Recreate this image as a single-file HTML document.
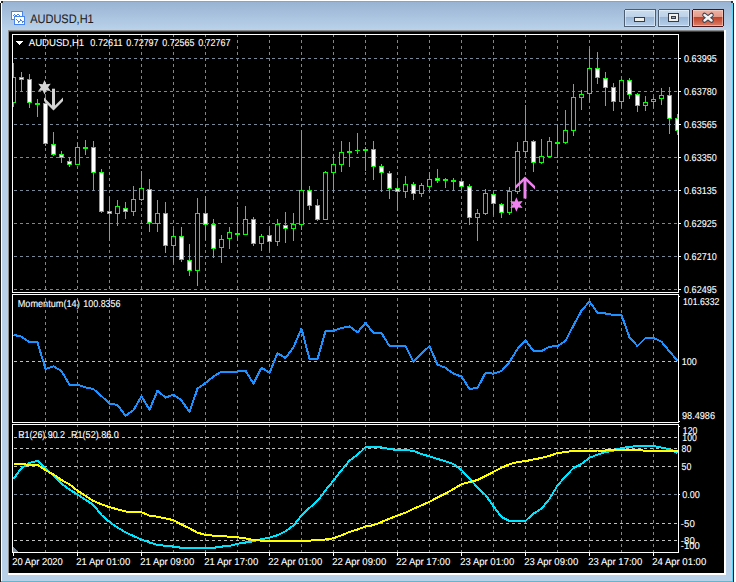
<!DOCTYPE html>
<html><head><meta charset="utf-8"><style>
html,body{margin:0;padding:0;background:#fff;}
body{width:736px;height:582px;overflow:hidden;}
svg{display:block;}
</style></head><body>
<svg width="736" height="582" viewBox="0 0 736 582" shape-rendering="crispEdges">
<rect x="0" y="0" width="736" height="582" fill="#ffffff"/>
<rect x="1" y="1" width="732" height="580" fill="#b9d1e8"/>
<defs><linearGradient id="tb" x1="0" y1="0" x2="0" y2="1"><stop offset="0" stop-color="#97b2d2"/><stop offset="1" stop-color="#bad2ea"/></linearGradient><linearGradient id="btnTop" x1="0" y1="0" x2="0" y2="1"><stop offset="0" stop-color="#cadcef"/><stop offset="1" stop-color="#bcd1e8"/></linearGradient><linearGradient id="btnBot" x1="0" y1="0" x2="0" y2="1"><stop offset="0" stop-color="#98b5d6"/><stop offset="1" stop-color="#b8cfe8"/></linearGradient><linearGradient id="clTop" x1="0" y1="0" x2="0" y2="1"><stop offset="0" stop-color="#eeb2a4"/><stop offset="1" stop-color="#e39a88"/></linearGradient><linearGradient id="clBot" x1="0" y1="0" x2="0" y2="1"><stop offset="0" stop-color="#bf3f25"/><stop offset="1" stop-color="#dc8068"/></linearGradient><clipPath id="cp"><rect x="13" y="0" width="665" height="582"/></clipPath><clipPath id="cp35"><rect x="0" y="35" width="736" height="257"/></clipPath><clipPath id="cp295"><rect x="0" y="295" width="736" height="127"/></clipPath><clipPath id="cp425"><rect x="0" y="425" width="736" height="127"/></clipPath></defs>
<rect x="2" y="1" width="730" height="29" fill="url(#tb)"/>
<rect x="2" y="1" width="730" height="1" fill="#8ea8c7"/>
<rect x="0" y="3" width="1" height="579" fill="#1a1a1a"/>
<rect x="1" y="3" width="1" height="578" fill="#ffffff"/>
<rect x="733" y="3" width="1" height="579" fill="#1a1a1a"/>
<rect x="732" y="3" width="1" height="578" fill="#58d2f4"/>
<rect x="2" y="0" width="731" height="1" fill="#ffffff"/>
<rect x="3" y="1" width="730" height="1" fill="#8aa3c2"/>
<rect x="1" y="581" width="732" height="1" fill="#22d0e8"/>
<rect x="1" y="1" width="2" height="2" fill="#2a2a2a"/>
<rect x="731" y="1" width="2" height="2" fill="#2a3a3a"/>
<rect x="8" y="30" width="718" height="1" fill="#8a8a8a"/>
<rect x="8" y="30" width="1" height="544" fill="#8a8a8a"/>
<rect x="9" y="31" width="1" height="542" fill="#404040"/>
<rect x="9" y="31" width="715" height="542" fill="#000000"/>
<rect x="9" y="31" width="715" height="1" fill="#404040"/>
<rect x="8" y="573" width="718" height="2" fill="#ffffff"/>
<rect x="724" y="30" width="2" height="545" fill="#ffffff"/>
<path d="M45.5,34V292" stroke="#778899" stroke-width="1" stroke-dasharray="3 3" fill="none" clip-path="url(#cp35)"/>
<path d="M77.5,34V292" stroke="#778899" stroke-width="1" stroke-dasharray="3 3" fill="none" clip-path="url(#cp35)"/>
<path d="M109.5,34V292" stroke="#778899" stroke-width="1" stroke-dasharray="3 3" fill="none" clip-path="url(#cp35)"/>
<path d="M141.5,34V292" stroke="#778899" stroke-width="1" stroke-dasharray="3 3" fill="none" clip-path="url(#cp35)"/>
<path d="M173.5,34V292" stroke="#778899" stroke-width="1" stroke-dasharray="3 3" fill="none" clip-path="url(#cp35)"/>
<path d="M205.5,34V292" stroke="#778899" stroke-width="1" stroke-dasharray="3 3" fill="none" clip-path="url(#cp35)"/>
<path d="M237.5,34V292" stroke="#778899" stroke-width="1" stroke-dasharray="3 3" fill="none" clip-path="url(#cp35)"/>
<path d="M269.5,34V292" stroke="#778899" stroke-width="1" stroke-dasharray="3 3" fill="none" clip-path="url(#cp35)"/>
<path d="M301.5,34V292" stroke="#778899" stroke-width="1" stroke-dasharray="3 3" fill="none" clip-path="url(#cp35)"/>
<path d="M333.5,34V292" stroke="#778899" stroke-width="1" stroke-dasharray="3 3" fill="none" clip-path="url(#cp35)"/>
<path d="M365.5,34V292" stroke="#778899" stroke-width="1" stroke-dasharray="3 3" fill="none" clip-path="url(#cp35)"/>
<path d="M397.5,34V292" stroke="#778899" stroke-width="1" stroke-dasharray="3 3" fill="none" clip-path="url(#cp35)"/>
<path d="M429.5,34V292" stroke="#778899" stroke-width="1" stroke-dasharray="3 3" fill="none" clip-path="url(#cp35)"/>
<path d="M461.5,34V292" stroke="#778899" stroke-width="1" stroke-dasharray="3 3" fill="none" clip-path="url(#cp35)"/>
<path d="M493.5,34V292" stroke="#778899" stroke-width="1" stroke-dasharray="3 3" fill="none" clip-path="url(#cp35)"/>
<path d="M525.5,34V292" stroke="#778899" stroke-width="1" stroke-dasharray="3 3" fill="none" clip-path="url(#cp35)"/>
<path d="M557.5,34V292" stroke="#778899" stroke-width="1" stroke-dasharray="3 3" fill="none" clip-path="url(#cp35)"/>
<path d="M589.5,34V292" stroke="#778899" stroke-width="1" stroke-dasharray="3 3" fill="none" clip-path="url(#cp35)"/>
<path d="M621.5,34V292" stroke="#778899" stroke-width="1" stroke-dasharray="3 3" fill="none" clip-path="url(#cp35)"/>
<path d="M653.5,34V292" stroke="#778899" stroke-width="1" stroke-dasharray="3 3" fill="none" clip-path="url(#cp35)"/>
<path d="M45.5,292V422" stroke="#778899" stroke-width="1" stroke-dasharray="3 3" fill="none" clip-path="url(#cp295)"/>
<path d="M77.5,292V422" stroke="#778899" stroke-width="1" stroke-dasharray="3 3" fill="none" clip-path="url(#cp295)"/>
<path d="M109.5,292V422" stroke="#778899" stroke-width="1" stroke-dasharray="3 3" fill="none" clip-path="url(#cp295)"/>
<path d="M141.5,292V422" stroke="#778899" stroke-width="1" stroke-dasharray="3 3" fill="none" clip-path="url(#cp295)"/>
<path d="M173.5,292V422" stroke="#778899" stroke-width="1" stroke-dasharray="3 3" fill="none" clip-path="url(#cp295)"/>
<path d="M205.5,292V422" stroke="#778899" stroke-width="1" stroke-dasharray="3 3" fill="none" clip-path="url(#cp295)"/>
<path d="M237.5,292V422" stroke="#778899" stroke-width="1" stroke-dasharray="3 3" fill="none" clip-path="url(#cp295)"/>
<path d="M269.5,292V422" stroke="#778899" stroke-width="1" stroke-dasharray="3 3" fill="none" clip-path="url(#cp295)"/>
<path d="M301.5,292V422" stroke="#778899" stroke-width="1" stroke-dasharray="3 3" fill="none" clip-path="url(#cp295)"/>
<path d="M333.5,292V422" stroke="#778899" stroke-width="1" stroke-dasharray="3 3" fill="none" clip-path="url(#cp295)"/>
<path d="M365.5,292V422" stroke="#778899" stroke-width="1" stroke-dasharray="3 3" fill="none" clip-path="url(#cp295)"/>
<path d="M397.5,292V422" stroke="#778899" stroke-width="1" stroke-dasharray="3 3" fill="none" clip-path="url(#cp295)"/>
<path d="M429.5,292V422" stroke="#778899" stroke-width="1" stroke-dasharray="3 3" fill="none" clip-path="url(#cp295)"/>
<path d="M461.5,292V422" stroke="#778899" stroke-width="1" stroke-dasharray="3 3" fill="none" clip-path="url(#cp295)"/>
<path d="M493.5,292V422" stroke="#778899" stroke-width="1" stroke-dasharray="3 3" fill="none" clip-path="url(#cp295)"/>
<path d="M525.5,292V422" stroke="#778899" stroke-width="1" stroke-dasharray="3 3" fill="none" clip-path="url(#cp295)"/>
<path d="M557.5,292V422" stroke="#778899" stroke-width="1" stroke-dasharray="3 3" fill="none" clip-path="url(#cp295)"/>
<path d="M589.5,292V422" stroke="#778899" stroke-width="1" stroke-dasharray="3 3" fill="none" clip-path="url(#cp295)"/>
<path d="M621.5,292V422" stroke="#778899" stroke-width="1" stroke-dasharray="3 3" fill="none" clip-path="url(#cp295)"/>
<path d="M653.5,292V422" stroke="#778899" stroke-width="1" stroke-dasharray="3 3" fill="none" clip-path="url(#cp295)"/>
<path d="M45.5,424V552" stroke="#778899" stroke-width="1" stroke-dasharray="3 3" fill="none" clip-path="url(#cp425)"/>
<path d="M77.5,424V552" stroke="#778899" stroke-width="1" stroke-dasharray="3 3" fill="none" clip-path="url(#cp425)"/>
<path d="M109.5,424V552" stroke="#778899" stroke-width="1" stroke-dasharray="3 3" fill="none" clip-path="url(#cp425)"/>
<path d="M141.5,424V552" stroke="#778899" stroke-width="1" stroke-dasharray="3 3" fill="none" clip-path="url(#cp425)"/>
<path d="M173.5,424V552" stroke="#778899" stroke-width="1" stroke-dasharray="3 3" fill="none" clip-path="url(#cp425)"/>
<path d="M205.5,424V552" stroke="#778899" stroke-width="1" stroke-dasharray="3 3" fill="none" clip-path="url(#cp425)"/>
<path d="M237.5,424V552" stroke="#778899" stroke-width="1" stroke-dasharray="3 3" fill="none" clip-path="url(#cp425)"/>
<path d="M269.5,424V552" stroke="#778899" stroke-width="1" stroke-dasharray="3 3" fill="none" clip-path="url(#cp425)"/>
<path d="M301.5,424V552" stroke="#778899" stroke-width="1" stroke-dasharray="3 3" fill="none" clip-path="url(#cp425)"/>
<path d="M333.5,424V552" stroke="#778899" stroke-width="1" stroke-dasharray="3 3" fill="none" clip-path="url(#cp425)"/>
<path d="M365.5,424V552" stroke="#778899" stroke-width="1" stroke-dasharray="3 3" fill="none" clip-path="url(#cp425)"/>
<path d="M397.5,424V552" stroke="#778899" stroke-width="1" stroke-dasharray="3 3" fill="none" clip-path="url(#cp425)"/>
<path d="M429.5,424V552" stroke="#778899" stroke-width="1" stroke-dasharray="3 3" fill="none" clip-path="url(#cp425)"/>
<path d="M461.5,424V552" stroke="#778899" stroke-width="1" stroke-dasharray="3 3" fill="none" clip-path="url(#cp425)"/>
<path d="M493.5,424V552" stroke="#778899" stroke-width="1" stroke-dasharray="3 3" fill="none" clip-path="url(#cp425)"/>
<path d="M525.5,424V552" stroke="#778899" stroke-width="1" stroke-dasharray="3 3" fill="none" clip-path="url(#cp425)"/>
<path d="M557.5,424V552" stroke="#778899" stroke-width="1" stroke-dasharray="3 3" fill="none" clip-path="url(#cp425)"/>
<path d="M589.5,424V552" stroke="#778899" stroke-width="1" stroke-dasharray="3 3" fill="none" clip-path="url(#cp425)"/>
<path d="M621.5,424V552" stroke="#778899" stroke-width="1" stroke-dasharray="3 3" fill="none" clip-path="url(#cp425)"/>
<path d="M653.5,424V552" stroke="#778899" stroke-width="1" stroke-dasharray="3 3" fill="none" clip-path="url(#cp425)"/>
<path d="M8,58.5H678" stroke="#778899" stroke-width="1" stroke-dasharray="3 3" fill="none" clip-path="url(#cp)"/>
<path d="M8,91.5H678" stroke="#778899" stroke-width="1" stroke-dasharray="3 3" fill="none" clip-path="url(#cp)"/>
<path d="M8,124.5H678" stroke="#778899" stroke-width="1" stroke-dasharray="3 3" fill="none" clip-path="url(#cp)"/>
<path d="M8,157.5H678" stroke="#778899" stroke-width="1" stroke-dasharray="3 3" fill="none" clip-path="url(#cp)"/>
<path d="M8,190.5H678" stroke="#778899" stroke-width="1" stroke-dasharray="3 3" fill="none" clip-path="url(#cp)"/>
<path d="M8,223.5H678" stroke="#778899" stroke-width="1" stroke-dasharray="3 3" fill="none" clip-path="url(#cp)"/>
<path d="M8,256.5H678" stroke="#778899" stroke-width="1" stroke-dasharray="3 3" fill="none" clip-path="url(#cp)"/>
<path d="M8,289.5H678" stroke="#778899" stroke-width="1" stroke-dasharray="3 3" fill="none" clip-path="url(#cp)"/>
<path d="M8,361.5H678" stroke="#c0c0c0" stroke-width="1" stroke-dasharray="3 3" fill="none" clip-path="url(#cp)"/>
<path d="M8,437.5H678" stroke="#c0c0c0" stroke-width="1" stroke-dasharray="3 3" fill="none" clip-path="url(#cp)"/>
<path d="M8,448.5H678" stroke="#c0c0c0" stroke-width="1" stroke-dasharray="3 3" fill="none" clip-path="url(#cp)"/>
<path d="M8,466.5H678" stroke="#c0c0c0" stroke-width="1" stroke-dasharray="3 3" fill="none" clip-path="url(#cp)"/>
<path d="M8,523.5H678" stroke="#c0c0c0" stroke-width="1" stroke-dasharray="3 3" fill="none" clip-path="url(#cp)"/>
<path d="M8,540.5H678" stroke="#c0c0c0" stroke-width="1" stroke-dasharray="3 3" fill="none" clip-path="url(#cp)"/>
<path d="M8,494.5H678" stroke="#778899" stroke-width="1" stroke-dasharray="3 3" fill="none" clip-path="url(#cp)"/>
<svg x="13" y="35" width="665" height="257" viewBox="13 35 665 257" overflow="hidden">
<rect x="13" y="63" width="1" height="44" fill="#00ff00"/>
<rect x="11" y="77" width="5" height="26" fill="#00ff00"/>
<rect x="12" y="78" width="3" height="24" fill="#000000"/>
<rect x="21" y="72" width="1" height="20" fill="#00ff00"/>
<rect x="19" y="77" width="5" height="3" fill="#00ff00"/>
<rect x="20" y="78" width="3" height="1" fill="#ffffff"/>
<rect x="29" y="74" width="1" height="34" fill="#00ff00"/>
<rect x="27" y="79" width="5" height="24" fill="#00ff00"/>
<rect x="28" y="80" width="3" height="22" fill="#ffffff"/>
<rect x="37" y="99" width="1" height="18" fill="#00ff00"/>
<rect x="35" y="103" width="5" height="2" fill="#00ff00"/>
<rect x="45" y="97" width="1" height="49" fill="#00ff00"/>
<rect x="43" y="103" width="5" height="41" fill="#00ff00"/>
<rect x="44" y="104" width="3" height="39" fill="#ffffff"/>
<rect x="53" y="132" width="1" height="24" fill="#00ff00"/>
<rect x="51" y="144" width="5" height="11" fill="#00ff00"/>
<rect x="52" y="145" width="3" height="9" fill="#ffffff"/>
<rect x="61" y="151" width="1" height="12" fill="#00ff00"/>
<rect x="59" y="154" width="5" height="4" fill="#00ff00"/>
<rect x="60" y="155" width="3" height="2" fill="#ffffff"/>
<rect x="69" y="157" width="1" height="10" fill="#00ff00"/>
<rect x="67" y="161" width="5" height="4" fill="#00ff00"/>
<rect x="68" y="162" width="3" height="2" fill="#ffffff"/>
<rect x="77" y="143" width="1" height="22" fill="#00ff00"/>
<rect x="75" y="147" width="5" height="18" fill="#00ff00"/>
<rect x="76" y="148" width="3" height="16" fill="#000000"/>
<rect x="85" y="140" width="1" height="15" fill="#00ff00"/>
<rect x="83" y="147" width="5" height="2" fill="#00ff00"/>
<rect x="93" y="141" width="1" height="50" fill="#00ff00"/>
<rect x="91" y="147" width="5" height="26" fill="#00ff00"/>
<rect x="92" y="148" width="3" height="24" fill="#ffffff"/>
<rect x="101" y="169" width="1" height="44" fill="#00ff00"/>
<rect x="99" y="172" width="5" height="40" fill="#00ff00"/>
<rect x="100" y="173" width="3" height="38" fill="#ffffff"/>
<rect x="109" y="197" width="1" height="44" fill="#00ff00"/>
<rect x="107" y="211" width="5" height="3" fill="#00ff00"/>
<rect x="108" y="212" width="3" height="1" fill="#ffffff"/>
<rect x="117" y="200" width="1" height="26" fill="#00ff00"/>
<rect x="115" y="206" width="5" height="8" fill="#00ff00"/>
<rect x="116" y="207" width="3" height="6" fill="#000000"/>
<rect x="125" y="202" width="1" height="17" fill="#00ff00"/>
<rect x="123" y="208" width="5" height="4" fill="#00ff00"/>
<rect x="124" y="209" width="3" height="2" fill="#ffffff"/>
<rect x="133" y="186" width="1" height="30" fill="#00ff00"/>
<rect x="131" y="199" width="5" height="13" fill="#00ff00"/>
<rect x="132" y="200" width="3" height="11" fill="#000000"/>
<rect x="141" y="171" width="1" height="30" fill="#00ff00"/>
<rect x="139" y="188" width="5" height="12" fill="#00ff00"/>
<rect x="140" y="189" width="3" height="10" fill="#000000"/>
<rect x="149" y="179" width="1" height="53" fill="#00ff00"/>
<rect x="147" y="189" width="5" height="34" fill="#00ff00"/>
<rect x="148" y="190" width="3" height="32" fill="#ffffff"/>
<rect x="157" y="200" width="1" height="32" fill="#00ff00"/>
<rect x="155" y="213" width="5" height="11" fill="#00ff00"/>
<rect x="156" y="214" width="3" height="9" fill="#000000"/>
<rect x="165" y="202" width="1" height="51" fill="#00ff00"/>
<rect x="163" y="213" width="5" height="33" fill="#00ff00"/>
<rect x="164" y="214" width="3" height="31" fill="#ffffff"/>
<rect x="173" y="229" width="1" height="34" fill="#00ff00"/>
<rect x="171" y="236" width="5" height="10" fill="#00ff00"/>
<rect x="172" y="237" width="3" height="8" fill="#000000"/>
<rect x="181" y="227" width="1" height="35" fill="#00ff00"/>
<rect x="179" y="236" width="5" height="24" fill="#00ff00"/>
<rect x="180" y="237" width="3" height="22" fill="#ffffff"/>
<rect x="189" y="244" width="1" height="32" fill="#00ff00"/>
<rect x="187" y="260" width="5" height="11" fill="#00ff00"/>
<rect x="188" y="261" width="3" height="9" fill="#ffffff"/>
<rect x="197" y="198" width="1" height="88" fill="#00ff00"/>
<rect x="195" y="213" width="5" height="58" fill="#00ff00"/>
<rect x="196" y="214" width="3" height="56" fill="#000000"/>
<rect x="205" y="196" width="1" height="44" fill="#00ff00"/>
<rect x="203" y="213" width="5" height="12" fill="#00ff00"/>
<rect x="204" y="214" width="3" height="10" fill="#ffffff"/>
<rect x="213" y="219" width="1" height="39" fill="#00ff00"/>
<rect x="211" y="224" width="5" height="25" fill="#00ff00"/>
<rect x="212" y="225" width="3" height="23" fill="#ffffff"/>
<rect x="221" y="235" width="1" height="28" fill="#00ff00"/>
<rect x="219" y="239" width="5" height="9" fill="#00ff00"/>
<rect x="220" y="240" width="3" height="7" fill="#000000"/>
<rect x="229" y="227" width="1" height="22" fill="#00ff00"/>
<rect x="227" y="232" width="5" height="7" fill="#00ff00"/>
<rect x="228" y="233" width="3" height="5" fill="#000000"/>
<rect x="237" y="207" width="1" height="34" fill="#00ff00"/>
<rect x="235" y="233" width="5" height="2" fill="#00ff00"/>
<rect x="245" y="206" width="1" height="29" fill="#00ff00"/>
<rect x="243" y="219" width="5" height="16" fill="#00ff00"/>
<rect x="244" y="220" width="3" height="14" fill="#000000"/>
<rect x="253" y="217" width="1" height="29" fill="#00ff00"/>
<rect x="251" y="219" width="5" height="25" fill="#00ff00"/>
<rect x="252" y="220" width="3" height="23" fill="#ffffff"/>
<rect x="261" y="234" width="1" height="17" fill="#00ff00"/>
<rect x="259" y="236" width="5" height="8" fill="#00ff00"/>
<rect x="260" y="237" width="3" height="6" fill="#000000"/>
<rect x="269" y="228" width="1" height="23" fill="#00ff00"/>
<rect x="267" y="235" width="5" height="7" fill="#00ff00"/>
<rect x="268" y="236" width="3" height="5" fill="#ffffff"/>
<rect x="277" y="219" width="1" height="27" fill="#00ff00"/>
<rect x="275" y="224" width="5" height="18" fill="#00ff00"/>
<rect x="276" y="225" width="3" height="16" fill="#000000"/>
<rect x="285" y="212" width="1" height="31" fill="#00ff00"/>
<rect x="283" y="225" width="5" height="4" fill="#00ff00"/>
<rect x="284" y="226" width="3" height="2" fill="#ffffff"/>
<rect x="293" y="213" width="1" height="28" fill="#00ff00"/>
<rect x="291" y="224" width="5" height="5" fill="#00ff00"/>
<rect x="292" y="225" width="3" height="3" fill="#000000"/>
<rect x="301" y="130" width="1" height="100" fill="#00ff00"/>
<rect x="299" y="190" width="5" height="35" fill="#00ff00"/>
<rect x="300" y="191" width="3" height="33" fill="#000000"/>
<rect x="309" y="186" width="1" height="24" fill="#00ff00"/>
<rect x="307" y="190" width="5" height="16" fill="#00ff00"/>
<rect x="308" y="191" width="3" height="14" fill="#ffffff"/>
<rect x="317" y="199" width="1" height="22" fill="#00ff00"/>
<rect x="315" y="205" width="5" height="15" fill="#00ff00"/>
<rect x="316" y="206" width="3" height="13" fill="#ffffff"/>
<rect x="325" y="171" width="1" height="49" fill="#00ff00"/>
<rect x="323" y="172" width="5" height="48" fill="#00ff00"/>
<rect x="324" y="173" width="3" height="46" fill="#000000"/>
<rect x="333" y="154" width="1" height="39" fill="#00ff00"/>
<rect x="331" y="164" width="5" height="9" fill="#00ff00"/>
<rect x="332" y="165" width="3" height="7" fill="#000000"/>
<rect x="341" y="141" width="1" height="31" fill="#00ff00"/>
<rect x="339" y="152" width="5" height="13" fill="#00ff00"/>
<rect x="340" y="153" width="3" height="11" fill="#000000"/>
<rect x="349" y="142" width="1" height="25" fill="#00ff00"/>
<rect x="347" y="151" width="5" height="2" fill="#00ff00"/>
<rect x="357" y="133" width="1" height="21" fill="#00ff00"/>
<rect x="355" y="150" width="5" height="1" fill="#00ff00"/>
<rect x="365" y="147" width="1" height="24" fill="#00ff00"/>
<rect x="363" y="149" width="5" height="2" fill="#00ff00"/>
<rect x="373" y="141" width="1" height="39" fill="#00ff00"/>
<rect x="371" y="149" width="5" height="18" fill="#00ff00"/>
<rect x="372" y="150" width="3" height="16" fill="#ffffff"/>
<rect x="381" y="164" width="1" height="28" fill="#00ff00"/>
<rect x="379" y="166" width="5" height="7" fill="#00ff00"/>
<rect x="380" y="167" width="3" height="5" fill="#ffffff"/>
<rect x="389" y="171" width="1" height="28" fill="#00ff00"/>
<rect x="387" y="173" width="5" height="16" fill="#00ff00"/>
<rect x="388" y="174" width="3" height="14" fill="#ffffff"/>
<rect x="397" y="181" width="1" height="30" fill="#00ff00"/>
<rect x="395" y="188" width="5" height="4" fill="#00ff00"/>
<rect x="396" y="189" width="3" height="2" fill="#ffffff"/>
<rect x="405" y="176" width="1" height="22" fill="#00ff00"/>
<rect x="403" y="184" width="5" height="8" fill="#00ff00"/>
<rect x="404" y="185" width="3" height="6" fill="#000000"/>
<rect x="413" y="182" width="1" height="18" fill="#00ff00"/>
<rect x="411" y="184" width="5" height="10" fill="#00ff00"/>
<rect x="412" y="185" width="3" height="8" fill="#ffffff"/>
<rect x="421" y="183" width="1" height="14" fill="#00ff00"/>
<rect x="419" y="185" width="5" height="9" fill="#00ff00"/>
<rect x="420" y="186" width="3" height="7" fill="#000000"/>
<rect x="429" y="172" width="1" height="20" fill="#00ff00"/>
<rect x="427" y="179" width="5" height="8" fill="#00ff00"/>
<rect x="428" y="180" width="3" height="6" fill="#000000"/>
<rect x="437" y="169" width="1" height="14" fill="#00ff00"/>
<rect x="435" y="178" width="5" height="3" fill="#00ff00"/>
<rect x="436" y="179" width="3" height="1" fill="#ffffff"/>
<rect x="445" y="178" width="1" height="10" fill="#00ff00"/>
<rect x="443" y="179" width="5" height="2" fill="#00ff00"/>
<rect x="453" y="178" width="1" height="13" fill="#00ff00"/>
<rect x="451" y="180" width="5" height="2" fill="#00ff00"/>
<rect x="461" y="180" width="1" height="10" fill="#00ff00"/>
<rect x="459" y="181" width="5" height="6" fill="#00ff00"/>
<rect x="460" y="182" width="3" height="4" fill="#ffffff"/>
<rect x="469" y="184" width="1" height="41" fill="#00ff00"/>
<rect x="467" y="186" width="5" height="32" fill="#00ff00"/>
<rect x="468" y="187" width="3" height="30" fill="#ffffff"/>
<rect x="477" y="209" width="1" height="32" fill="#00ff00"/>
<rect x="475" y="213" width="5" height="5" fill="#00ff00"/>
<rect x="476" y="214" width="3" height="3" fill="#000000"/>
<rect x="485" y="189" width="1" height="26" fill="#00ff00"/>
<rect x="483" y="193" width="5" height="21" fill="#00ff00"/>
<rect x="484" y="194" width="3" height="19" fill="#000000"/>
<rect x="493" y="192" width="1" height="23" fill="#00ff00"/>
<rect x="491" y="194" width="5" height="10" fill="#00ff00"/>
<rect x="492" y="195" width="3" height="8" fill="#ffffff"/>
<rect x="501" y="203" width="1" height="15" fill="#00ff00"/>
<rect x="499" y="204" width="5" height="9" fill="#00ff00"/>
<rect x="500" y="205" width="3" height="7" fill="#ffffff"/>
<rect x="509" y="187" width="1" height="28" fill="#00ff00"/>
<rect x="507" y="191" width="5" height="22" fill="#00ff00"/>
<rect x="508" y="192" width="3" height="20" fill="#000000"/>
<rect x="517" y="142" width="1" height="52" fill="#00ff00"/>
<rect x="515" y="151" width="5" height="41" fill="#00ff00"/>
<rect x="516" y="152" width="3" height="39" fill="#000000"/>
<rect x="525" y="105" width="1" height="53" fill="#00ff00"/>
<rect x="523" y="141" width="5" height="11" fill="#00ff00"/>
<rect x="524" y="142" width="3" height="9" fill="#000000"/>
<rect x="533" y="140" width="1" height="32" fill="#00ff00"/>
<rect x="531" y="141" width="5" height="22" fill="#00ff00"/>
<rect x="532" y="142" width="3" height="20" fill="#ffffff"/>
<rect x="541" y="139" width="1" height="25" fill="#00ff00"/>
<rect x="539" y="156" width="5" height="7" fill="#00ff00"/>
<rect x="540" y="157" width="3" height="5" fill="#000000"/>
<rect x="549" y="137" width="1" height="21" fill="#00ff00"/>
<rect x="547" y="141" width="5" height="16" fill="#00ff00"/>
<rect x="548" y="142" width="3" height="14" fill="#000000"/>
<rect x="557" y="125" width="1" height="33" fill="#00ff00"/>
<rect x="555" y="142" width="5" height="2" fill="#00ff00"/>
<rect x="565" y="110" width="1" height="34" fill="#00ff00"/>
<rect x="563" y="130" width="5" height="13" fill="#00ff00"/>
<rect x="564" y="131" width="3" height="11" fill="#000000"/>
<rect x="573" y="84" width="1" height="52" fill="#00ff00"/>
<rect x="571" y="97" width="5" height="34" fill="#00ff00"/>
<rect x="572" y="98" width="3" height="32" fill="#000000"/>
<rect x="581" y="90" width="1" height="20" fill="#00ff00"/>
<rect x="579" y="94" width="5" height="4" fill="#00ff00"/>
<rect x="580" y="95" width="3" height="2" fill="#000000"/>
<rect x="589" y="49" width="1" height="53" fill="#00ff00"/>
<rect x="587" y="68" width="5" height="26" fill="#00ff00"/>
<rect x="588" y="69" width="3" height="24" fill="#000000"/>
<rect x="597" y="52" width="1" height="32" fill="#00ff00"/>
<rect x="595" y="68" width="5" height="10" fill="#00ff00"/>
<rect x="596" y="69" width="3" height="8" fill="#ffffff"/>
<rect x="605" y="72" width="1" height="34" fill="#00ff00"/>
<rect x="603" y="78" width="5" height="10" fill="#00ff00"/>
<rect x="604" y="79" width="3" height="8" fill="#ffffff"/>
<rect x="613" y="83" width="1" height="28" fill="#00ff00"/>
<rect x="611" y="87" width="5" height="15" fill="#00ff00"/>
<rect x="612" y="88" width="3" height="13" fill="#ffffff"/>
<rect x="621" y="79" width="1" height="29" fill="#00ff00"/>
<rect x="619" y="80" width="5" height="22" fill="#00ff00"/>
<rect x="620" y="81" width="3" height="20" fill="#000000"/>
<rect x="629" y="78" width="1" height="21" fill="#00ff00"/>
<rect x="627" y="80" width="5" height="15" fill="#00ff00"/>
<rect x="628" y="81" width="3" height="13" fill="#ffffff"/>
<rect x="637" y="93" width="1" height="19" fill="#00ff00"/>
<rect x="635" y="94" width="5" height="12" fill="#00ff00"/>
<rect x="636" y="95" width="3" height="10" fill="#ffffff"/>
<rect x="645" y="96" width="1" height="15" fill="#00ff00"/>
<rect x="643" y="102" width="5" height="4" fill="#00ff00"/>
<rect x="644" y="103" width="3" height="2" fill="#000000"/>
<rect x="653" y="97" width="1" height="11" fill="#00ff00"/>
<rect x="651" y="99" width="5" height="3" fill="#00ff00"/>
<rect x="652" y="100" width="3" height="1" fill="#000000"/>
<rect x="661" y="88" width="1" height="17" fill="#00ff00"/>
<rect x="659" y="95" width="5" height="4" fill="#00ff00"/>
<rect x="660" y="96" width="3" height="2" fill="#000000"/>
<rect x="669" y="87" width="1" height="47" fill="#00ff00"/>
<rect x="667" y="95" width="5" height="24" fill="#00ff00"/>
<rect x="668" y="96" width="3" height="22" fill="#ffffff"/>
<rect x="677" y="114" width="1" height="21" fill="#00ff00"/>
<rect x="675" y="118" width="5" height="13" fill="#00ff00"/>
<rect x="676" y="119" width="3" height="11" fill="#ffffff"/>
</svg>
<svg x="13" y="295" width="665" height="127" viewBox="13 295 665 127" overflow="hidden">
<polyline points="13.5,334.8 21.5,336.7 29.5,342.4 37.5,342.4 45.5,368.9 53.5,366.3 61.5,371.1 69.5,384.6 77.5,384.8 85.5,387.4 93.5,389.1 101.5,396.1 109.5,403.5 117.5,405.0 125.5,415.7 133.5,410.2 141.5,396.1 149.5,409.8 157.5,390.7 165.5,397.6 173.5,394.6 181.5,400.4 189.5,412.0 197.5,388.5 205.5,383.0 213.5,376.5 221.5,371.5 229.5,371.5 237.5,371.5 245.5,370.7 253.5,383.7 261.5,367.8 269.5,372.8 277.5,353.3 285.5,358.0 293.5,347.2 301.5,328.7 309.5,359.1 317.5,359.1 325.5,330.9 333.5,330.9 341.5,328.0 349.5,326.5 357.5,332.4 365.5,322.8 373.5,333.0 381.5,333.0 389.5,346.1 397.5,346.1 405.5,346.1 413.5,362.0 421.5,353.7 429.5,346.1 437.5,364.6 445.5,367.8 453.5,373.7 461.5,376.5 469.5,388.9 477.5,388.0 485.5,372.8 493.5,373.7 501.5,371.1 509.5,362.0 517.5,348.9 525.5,340.2 533.5,351.1 541.5,351.1 549.5,346.7 557.5,346.1 565.5,340.7 573.5,325.4 581.5,310.7 589.5,301.5 597.5,312.8 605.5,313.5 613.5,315.0 621.5,315.0 629.5,337.4 637.5,346.1 645.5,338.0 653.5,338.0 661.5,341.7 669.5,351.5 677.5,360.7" fill="none" stroke="#1e90ff" stroke-width="2" stroke-linejoin="round" shape-rendering="crispEdges"/>
</svg>
<svg x="13" y="425" width="665" height="127" viewBox="13 425 665 127" overflow="hidden">
<polyline points="13.5,478.9 21.5,468.1 29.5,462.9 37.5,460.9 45.5,468.0 53.5,475.9 61.5,483.8 69.5,489.5 77.5,494.5 85.5,499.7 93.5,505.0 101.5,515.0 109.5,522.0 117.5,527.5 125.5,532.3 133.5,536.0 141.5,539.6 149.5,542.5 157.5,545.0 165.5,545.8 173.5,546.6 181.5,547.8 189.5,547.8 197.5,547.8 205.5,547.8 213.5,547.8 221.5,546.6 229.5,545.8 237.5,543.8 245.5,542.5 253.5,541.2 261.5,539.3 269.5,537.6 277.5,535.2 285.5,531.4 293.5,525.4 301.5,515.6 309.5,507.9 317.5,500.9 325.5,490.3 333.5,480.5 341.5,470.3 349.5,460.7 357.5,454.8 365.5,447.1 373.5,447.1 381.5,447.4 389.5,449.1 397.5,449.9 405.5,449.9 413.5,451.0 421.5,454.0 429.5,456.4 437.5,458.9 445.5,461.3 453.5,464.1 461.5,470.0 469.5,478.5 477.5,487.4 485.5,495.0 493.5,506.2 501.5,517.0 509.5,520.9 517.5,520.9 525.5,520.9 533.5,513.6 541.5,508.7 549.5,498.9 557.5,485.5 565.5,476.3 573.5,468.0 581.5,463.9 589.5,457.8 597.5,454.6 605.5,452.1 613.5,450.5 621.5,448.0 629.5,446.9 637.5,445.9 645.5,445.6 653.5,445.9 661.5,447.6 669.5,449.2 677.5,452.9" fill="none" stroke="#00e5ff" stroke-width="2" stroke-linejoin="round" shape-rendering="crispEdges"/>
</svg>
<svg x="13" y="425" width="665" height="127" viewBox="13 425 665 127" overflow="hidden">
<polyline points="13.5,464.2 21.5,464.2 29.5,464.8 37.5,464.8 45.5,470.2 53.5,474.6 61.5,480.0 69.5,484.4 77.5,490.7 85.5,495.8 93.5,501.0 101.5,504.3 109.5,507.2 117.5,509.3 125.5,511.5 133.5,511.8 141.5,512.3 149.5,515.6 157.5,516.7 165.5,518.4 173.5,520.2 181.5,524.6 189.5,528.3 197.5,532.7 205.5,534.9 213.5,535.7 221.5,536.0 229.5,536.8 237.5,537.3 245.5,538.4 253.5,540.1 261.5,540.6 269.5,540.9 277.5,541.2 285.5,541.2 293.5,541.2 301.5,540.9 309.5,540.6 317.5,540.1 325.5,539.5 333.5,538.3 341.5,535.3 349.5,532.0 357.5,529.5 365.5,526.5 373.5,525.2 381.5,522.0 389.5,518.6 397.5,515.6 405.5,512.7 413.5,508.7 421.5,505.4 429.5,501.7 437.5,497.5 445.5,493.5 453.5,489.0 461.5,484.2 469.5,482.0 477.5,480.0 485.5,476.0 493.5,471.9 501.5,467.8 509.5,464.2 517.5,462.0 525.5,461.2 533.5,459.4 541.5,458.0 549.5,455.9 557.5,453.1 565.5,452.0 573.5,451.0 581.5,450.8 589.5,450.8 597.5,450.5 605.5,450.5 613.5,449.7 621.5,449.7 629.5,449.7 637.5,449.7 645.5,450.8 653.5,450.8 661.5,450.8 669.5,450.8 677.5,450.8" fill="none" stroke="#ffff00" stroke-width="2" stroke-linejoin="round" shape-rendering="crispEdges"/>
</svg>
<rect x="12" y="34" width="667" height="1" fill="#ffffff"/>
<rect x="12" y="292" width="667" height="1" fill="#ffffff"/>
<rect x="12" y="34" width="1" height="259" fill="#ffffff"/>
<rect x="678" y="34" width="1" height="259" fill="#ffffff"/>
<rect x="12" y="294" width="667" height="1" fill="#ffffff"/>
<rect x="12" y="422" width="667" height="1" fill="#ffffff"/>
<rect x="12" y="294" width="1" height="129" fill="#ffffff"/>
<rect x="678" y="294" width="1" height="129" fill="#ffffff"/>
<rect x="12" y="424" width="667" height="1" fill="#ffffff"/>
<rect x="12" y="552" width="667" height="1" fill="#ffffff"/>
<rect x="12" y="424" width="1" height="129" fill="#ffffff"/>
<rect x="678" y="424" width="1" height="129" fill="#ffffff"/>
<rect x="679" y="58" width="2" height="1" fill="#ffffff"/>
<rect x="679" y="91" width="2" height="1" fill="#ffffff"/>
<rect x="679" y="124" width="2" height="1" fill="#ffffff"/>
<rect x="679" y="157" width="2" height="1" fill="#ffffff"/>
<rect x="679" y="190" width="2" height="1" fill="#ffffff"/>
<rect x="679" y="223" width="2" height="1" fill="#ffffff"/>
<rect x="679" y="256" width="2" height="1" fill="#ffffff"/>
<rect x="679" y="289" width="2" height="1" fill="#ffffff"/>
<rect x="13" y="553" width="1" height="3" fill="#ffffff"/>
<rect x="77" y="553" width="1" height="3" fill="#ffffff"/>
<rect x="141" y="553" width="1" height="3" fill="#ffffff"/>
<rect x="205" y="553" width="1" height="3" fill="#ffffff"/>
<rect x="269" y="553" width="1" height="3" fill="#ffffff"/>
<rect x="333" y="553" width="1" height="3" fill="#ffffff"/>
<rect x="397" y="553" width="1" height="3" fill="#ffffff"/>
<rect x="461" y="553" width="1" height="3" fill="#ffffff"/>
<rect x="525" y="553" width="1" height="3" fill="#ffffff"/>
<rect x="589" y="553" width="1" height="3" fill="#ffffff"/>
<rect x="653" y="553" width="1" height="3" fill="#ffffff"/>
<rect x="679" y="296" width="1" height="1" fill="#ffffff"/>
<rect x="679" y="421" width="1" height="1" fill="#ffffff"/>
<rect x="679" y="426" width="1" height="1" fill="#ffffff"/>
<rect x="679" y="494" width="1" height="1" fill="#ffffff"/>
<polygon points="13,547 13,552 18.5,552" fill="#7d8c9c"/>
<polygon points="16,41 23,41 19.5,45" fill="#ffffff"/>
<text x="28.8" y="46" font-family="Liberation Sans, sans-serif" font-size="10" fill="#ffffff" stroke="#ffffff" stroke-width="0.1" text-rendering="geometricPrecision" textLength="55.4" lengthAdjust="spacingAndGlyphs">AUDUSD,H1</text>
<text x="90.3" y="46" font-family="Liberation Sans, sans-serif" font-size="10" fill="#ffffff" stroke="#ffffff" stroke-width="0.1" text-rendering="geometricPrecision" textLength="32.3" lengthAdjust="spacingAndGlyphs">0.72611</text>
<text x="126.25" y="46" font-family="Liberation Sans, sans-serif" font-size="10" fill="#ffffff" stroke="#ffffff" stroke-width="0.1" text-rendering="geometricPrecision" textLength="32.3" lengthAdjust="spacingAndGlyphs">0.72797</text>
<text x="162.2" y="46" font-family="Liberation Sans, sans-serif" font-size="10" fill="#ffffff" stroke="#ffffff" stroke-width="0.1" text-rendering="geometricPrecision" textLength="32.3" lengthAdjust="spacingAndGlyphs">0.72565</text>
<text x="198.15" y="46" font-family="Liberation Sans, sans-serif" font-size="10" fill="#ffffff" stroke="#ffffff" stroke-width="0.1" text-rendering="geometricPrecision" textLength="32.3" lengthAdjust="spacingAndGlyphs">0.72767</text>
<text x="684.1" y="62" font-family="Liberation Sans, sans-serif" font-size="10" fill="#ffffff" stroke="#ffffff" stroke-width="0.1" text-rendering="geometricPrecision" textLength="32.6" lengthAdjust="spacingAndGlyphs">0.63995</text>
<text x="684.1" y="95" font-family="Liberation Sans, sans-serif" font-size="10" fill="#ffffff" stroke="#ffffff" stroke-width="0.1" text-rendering="geometricPrecision" textLength="32.6" lengthAdjust="spacingAndGlyphs">0.63780</text>
<text x="684.1" y="128" font-family="Liberation Sans, sans-serif" font-size="10" fill="#ffffff" stroke="#ffffff" stroke-width="0.1" text-rendering="geometricPrecision" textLength="32.6" lengthAdjust="spacingAndGlyphs">0.63565</text>
<text x="684.1" y="161" font-family="Liberation Sans, sans-serif" font-size="10" fill="#ffffff" stroke="#ffffff" stroke-width="0.1" text-rendering="geometricPrecision" textLength="32.6" lengthAdjust="spacingAndGlyphs">0.63350</text>
<text x="684.1" y="194" font-family="Liberation Sans, sans-serif" font-size="10" fill="#ffffff" stroke="#ffffff" stroke-width="0.1" text-rendering="geometricPrecision" textLength="32.6" lengthAdjust="spacingAndGlyphs">0.63135</text>
<text x="684.1" y="227" font-family="Liberation Sans, sans-serif" font-size="10" fill="#ffffff" stroke="#ffffff" stroke-width="0.1" text-rendering="geometricPrecision" textLength="32.6" lengthAdjust="spacingAndGlyphs">0.62925</text>
<text x="684.1" y="260" font-family="Liberation Sans, sans-serif" font-size="10" fill="#ffffff" stroke="#ffffff" stroke-width="0.1" text-rendering="geometricPrecision" textLength="32.6" lengthAdjust="spacingAndGlyphs">0.62710</text>
<text x="684.1" y="293" font-family="Liberation Sans, sans-serif" font-size="10" fill="#ffffff" stroke="#ffffff" stroke-width="0.1" text-rendering="geometricPrecision" textLength="32.6" lengthAdjust="spacingAndGlyphs">0.62495</text>
<text x="17.7" y="307" font-family="Liberation Sans, sans-serif" font-size="10" fill="#ffffff" stroke="#ffffff" stroke-width="0.1" text-rendering="geometricPrecision" textLength="62" lengthAdjust="spacingAndGlyphs">Momentum(14)</text>
<text x="83.3" y="307" font-family="Liberation Sans, sans-serif" font-size="10" fill="#ffffff" stroke="#ffffff" stroke-width="0.1" text-rendering="geometricPrecision" textLength="37.2" lengthAdjust="spacingAndGlyphs">100.8356</text>
<text x="683" y="305" font-family="Liberation Sans, sans-serif" font-size="10" fill="#ffffff" stroke="#ffffff" stroke-width="0.1" text-rendering="geometricPrecision" textLength="36.4" lengthAdjust="spacingAndGlyphs">101.6332</text>
<text x="681.7" y="365" font-family="Liberation Sans, sans-serif" font-size="10" fill="#ffffff" stroke="#ffffff" stroke-width="0.1" text-rendering="geometricPrecision" textLength="15" lengthAdjust="spacingAndGlyphs">100</text>
<text x="682" y="419" font-family="Liberation Sans, sans-serif" font-size="10" fill="#ffffff" stroke="#ffffff" stroke-width="0.1" text-rendering="geometricPrecision" textLength="33" lengthAdjust="spacingAndGlyphs">98.4986</text>
<text x="18.2" y="437.5" font-family="Liberation Sans, sans-serif" font-size="10" fill="#ffffff" stroke="#ffffff" stroke-width="0.1" text-rendering="geometricPrecision" textLength="46.8" lengthAdjust="spacingAndGlyphs">R1(26) 90.2</text>
<text x="71" y="437.5" font-family="Liberation Sans, sans-serif" font-size="10" fill="#ffffff" stroke="#ffffff" stroke-width="0.1" text-rendering="geometricPrecision" textLength="47.9" lengthAdjust="spacingAndGlyphs">R1(52) 86.0</text>
<text x="682.8" y="434" font-family="Liberation Sans, sans-serif" font-size="10" fill="#ffffff" stroke="#ffffff" stroke-width="0.1" text-rendering="geometricPrecision" textLength="14.5" lengthAdjust="spacingAndGlyphs">120</text>
<text x="682.3" y="441" font-family="Liberation Sans, sans-serif" font-size="10" fill="#ffffff" stroke="#ffffff" stroke-width="0.1" text-rendering="geometricPrecision" textLength="14.5" lengthAdjust="spacingAndGlyphs">100</text>
<text x="681.5" y="452" font-family="Liberation Sans, sans-serif" font-size="10" fill="#ffffff" stroke="#ffffff" stroke-width="0.1" text-rendering="geometricPrecision" textLength="9.8" lengthAdjust="spacingAndGlyphs">80</text>
<text x="681.5" y="470" font-family="Liberation Sans, sans-serif" font-size="10" fill="#ffffff" stroke="#ffffff" stroke-width="0.1" text-rendering="geometricPrecision" textLength="9.8" lengthAdjust="spacingAndGlyphs">50</text>
<text x="682.2" y="498" font-family="Liberation Sans, sans-serif" font-size="10" fill="#ffffff" stroke="#ffffff" stroke-width="0.1" text-rendering="geometricPrecision" textLength="17.6" lengthAdjust="spacingAndGlyphs">0.00</text>
<text x="680.8" y="527" font-family="Liberation Sans, sans-serif" font-size="10" fill="#ffffff" stroke="#ffffff" stroke-width="0.1" text-rendering="geometricPrecision" textLength="14" lengthAdjust="spacingAndGlyphs">-50</text>
<text x="680.8" y="544" font-family="Liberation Sans, sans-serif" font-size="10" fill="#ffffff" stroke="#ffffff" stroke-width="0.1" text-rendering="geometricPrecision" textLength="14" lengthAdjust="spacingAndGlyphs">-80</text>
<text x="680.8" y="549" font-family="Liberation Sans, sans-serif" font-size="10" fill="#ffffff" stroke="#ffffff" stroke-width="0.1" text-rendering="geometricPrecision" textLength="19" lengthAdjust="spacingAndGlyphs">-100</text>
<text x="12.2" y="565" font-family="Liberation Sans, sans-serif" font-size="10" fill="#ffffff" stroke="#ffffff" stroke-width="0.1" text-rendering="geometricPrecision" textLength="50.6" lengthAdjust="spacingAndGlyphs">20 Apr 2020</text>
<text x="76.2" y="565" font-family="Liberation Sans, sans-serif" font-size="10" fill="#ffffff" stroke="#ffffff" stroke-width="0.1" text-rendering="geometricPrecision" textLength="54" lengthAdjust="spacingAndGlyphs">21 Apr 01:00</text>
<text x="140.2" y="565" font-family="Liberation Sans, sans-serif" font-size="10" fill="#ffffff" stroke="#ffffff" stroke-width="0.1" text-rendering="geometricPrecision" textLength="54" lengthAdjust="spacingAndGlyphs">21 Apr 09:00</text>
<text x="204.2" y="565" font-family="Liberation Sans, sans-serif" font-size="10" fill="#ffffff" stroke="#ffffff" stroke-width="0.1" text-rendering="geometricPrecision" textLength="54" lengthAdjust="spacingAndGlyphs">21 Apr 17:00</text>
<text x="268.2" y="565" font-family="Liberation Sans, sans-serif" font-size="10" fill="#ffffff" stroke="#ffffff" stroke-width="0.1" text-rendering="geometricPrecision" textLength="54" lengthAdjust="spacingAndGlyphs">22 Apr 01:00</text>
<text x="332.2" y="565" font-family="Liberation Sans, sans-serif" font-size="10" fill="#ffffff" stroke="#ffffff" stroke-width="0.1" text-rendering="geometricPrecision" textLength="54" lengthAdjust="spacingAndGlyphs">22 Apr 09:00</text>
<text x="396.2" y="565" font-family="Liberation Sans, sans-serif" font-size="10" fill="#ffffff" stroke="#ffffff" stroke-width="0.1" text-rendering="geometricPrecision" textLength="54" lengthAdjust="spacingAndGlyphs">22 Apr 17:00</text>
<text x="460.2" y="565" font-family="Liberation Sans, sans-serif" font-size="10" fill="#ffffff" stroke="#ffffff" stroke-width="0.1" text-rendering="geometricPrecision" textLength="54" lengthAdjust="spacingAndGlyphs">23 Apr 01:00</text>
<text x="524.2" y="565" font-family="Liberation Sans, sans-serif" font-size="10" fill="#ffffff" stroke="#ffffff" stroke-width="0.1" text-rendering="geometricPrecision" textLength="54" lengthAdjust="spacingAndGlyphs">23 Apr 09:00</text>
<text x="588.2" y="565" font-family="Liberation Sans, sans-serif" font-size="10" fill="#ffffff" stroke="#ffffff" stroke-width="0.1" text-rendering="geometricPrecision" textLength="54" lengthAdjust="spacingAndGlyphs">23 Apr 17:00</text>
<text x="652.2" y="565" font-family="Liberation Sans, sans-serif" font-size="10" fill="#ffffff" stroke="#ffffff" stroke-width="0.1" text-rendering="geometricPrecision" textLength="54" lengthAdjust="spacingAndGlyphs">24 Apr 01:00</text>
<polygon points="44.50,80.10 46.30,84.18 50.74,83.70 48.10,87.30 50.74,90.90 46.30,90.42 44.50,94.50 42.70,90.42 38.26,90.90 40.90,87.30 38.26,83.70 42.70,84.18" fill="#d3d3d3" shape-rendering="geometricPrecision"/>
<g fill="#d3d3d3" shape-rendering="geometricPrecision"><rect x="52" y="88.7" width="3" height="19"/><polygon points="44,97.5 53.5,107 63,97.5 63,101 53.5,110.5 44,101"/></g>
<polygon points="516.40,197.30 518.20,201.38 522.64,200.90 520.00,204.50 522.64,208.10 518.20,207.62 516.40,211.70 514.60,207.62 510.16,208.10 512.80,204.50 510.16,200.90 514.60,201.38" fill="#ee82ee" shape-rendering="geometricPrecision"/>
<g fill="#ee82ee" shape-rendering="geometricPrecision"><rect x="523.5" y="179" width="3" height="19.5"/><polygon points="515,189.5 525,180 535,189.5 535,186 525,176.5 515,186"/></g>
<text x="30.2" y="23" font-family="Liberation Sans, sans-serif" font-size="12.3" fill="#1e1e1e" stroke="#1e1e1e" stroke-width="0.1" text-rendering="geometricPrecision" textLength="63.5" lengthAdjust="spacingAndGlyphs" shape-rendering="geometricPrecision">AUDUSD,H1</text>
<rect x="11" y="11" width="12" height="9" fill="#4a84e8"/>
<rect x="12" y="12" width="10" height="7" fill="#ffffff"/>
<rect x="13" y="15" width="1" height="1" fill="#4a84e8"/>
<rect x="14" y="14" width="1" height="1" fill="#4a84e8"/>
<rect x="15" y="15" width="1" height="1" fill="#4a84e8"/>
<rect x="16" y="15" width="1" height="1" fill="#4a84e8"/>
<rect x="17" y="14" width="1" height="1" fill="#4a84e8"/>
<rect x="18" y="14" width="1" height="1" fill="#4a84e8"/>
<rect x="19" y="15" width="1" height="1" fill="#4a84e8"/>
<rect x="20" y="16" width="1" height="1" fill="#4a84e8"/>
<rect x="14" y="16" width="11" height="9" fill="#4a84e8"/>
<rect x="15" y="17" width="9" height="7" fill="#ffffff"/>
<rect x="16" y="19" width="1" height="1" fill="#4a84e8"/>
<rect x="17" y="20" width="1" height="1" fill="#4a84e8"/>
<rect x="18" y="21" width="1" height="1" fill="#4a84e8"/>
<rect x="18" y="22" width="1" height="1" fill="#4a84e8"/>
<rect x="19" y="21" width="1" height="1" fill="#4a84e8"/>
<rect x="20" y="19" width="1" height="1" fill="#4a84e8"/>
<rect x="20" y="20" width="1" height="1" fill="#4a84e8"/>
<rect x="21" y="20" width="1" height="1" fill="#4a84e8"/>
<rect x="22" y="21" width="1" height="1" fill="#4a84e8"/>
<rect x="22" y="22" width="1" height="1" fill="#4a84e8"/>
<rect x="23" y="21" width="1" height="1" fill="#4a84e8"/>
<rect x="624" y="9" width="32" height="18" rx="2" ry="2" fill="#4c5d72"/>
<rect x="625" y="10" width="30" height="7" fill="url(#btnTop)"/>
<rect x="625" y="17" width="30" height="9" fill="url(#btnBot)"/>
<rect x="625" y="10" width="30" height="1" fill="#e6f0fa" opacity="0.8"/>
<rect x="625" y="25" width="30" height="1" fill="#e6f0fa" opacity="0.6"/>
<rect x="625" y="10" width="1" height="16" fill="#e6f0fa" opacity="0.6"/>
<rect x="654" y="10" width="1" height="16" fill="#e6f0fa" opacity="0.6"/>
<rect x="658" y="9" width="32" height="18" rx="2" ry="2" fill="#4c5d72"/>
<rect x="659" y="10" width="30" height="7" fill="url(#btnTop)"/>
<rect x="659" y="17" width="30" height="9" fill="url(#btnBot)"/>
<rect x="659" y="10" width="30" height="1" fill="#e6f0fa" opacity="0.8"/>
<rect x="659" y="25" width="30" height="1" fill="#e6f0fa" opacity="0.6"/>
<rect x="659" y="10" width="1" height="16" fill="#e6f0fa" opacity="0.6"/>
<rect x="688" y="10" width="1" height="16" fill="#e6f0fa" opacity="0.6"/>
<rect x="692" y="9" width="32" height="18" rx="2" ry="2" fill="#4a1419"/>
<rect x="693" y="10" width="30" height="7" fill="url(#clTop)"/>
<rect x="693" y="17" width="30" height="9" fill="url(#clBot)"/>
<rect x="693" y="10" width="30" height="1" fill="#f8d0c4" opacity="0.8"/>
<rect x="693" y="25" width="30" height="1" fill="#f8d0c4" opacity="0.6"/>
<rect x="693" y="10" width="1" height="16" fill="#f8d0c4" opacity="0.6"/>
<rect x="722" y="10" width="1" height="16" fill="#f8d0c4" opacity="0.6"/>
<rect x="634.5" y="17.5" width="10" height="4" rx="1" fill="#f0f0ec" stroke="#353c48" stroke-width="1"/>
<rect x="668.5" y="13.5" width="10" height="8" rx="1" fill="#f0f0ec" stroke="#353c48" stroke-width="1"/>
<rect x="671.5" y="16.5" width="4" height="2" fill="#8fa8c4" stroke="#353c48" stroke-width="1"/>
<path d="M704.5,15 L711.5,20.5 M711.5,15 L704.5,20.5" stroke="#3a4250" stroke-width="4.5" stroke-linecap="round" shape-rendering="geometricPrecision"/>
<path d="M704.5,15 L711.5,20.5 M711.5,15 L704.5,20.5" stroke="#f4f4f4" stroke-width="2.5" stroke-linecap="round" shape-rendering="geometricPrecision"/>
</svg>
</body></html>
